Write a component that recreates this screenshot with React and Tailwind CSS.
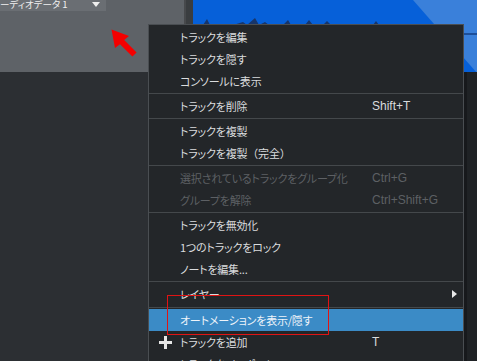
import React from "react";

const menu = [
    { label: "トラックを編集" },
    { label: "トラックを隠す" },
    { label: "コンソールに表示" },
    { sep: true },
    { label: "トラックを削除", key: "Shift+T" },
    { sep: true },
    { label: "トラックを複製" },
    { label: "トラックを複製", tail: "（完全）" },
    { sep: true },
    { label: "選択されているトラックをグループ化", key: "Ctrl+G", disabled: true },
    { label: "グループを解除", key: "Ctrl+Shift+G", disabled: true },
    { sep: true },
    { label: "トラックを無効化" },
    { label: "1つのトラックをロック" },
    { label: "ノートを編集..." },
    { sep: true },
    { label: "レイヤー", sub: true },
    { sep: true, tall: true },
    { label: "オートメーションを表示/隠す", active: true },
    { label: "トラックを追加", key: "T", plus: true },
    { label: "トラックをインポート" },
];

function PlusIcon() {
    return (
        <svg width="13" height="13" viewBox="0 0 13 13">
            <rect x="5" y="0" width="3" height="13" fill="#e6e6e6" />
            <rect x="0" y="5" width="13" height="3" fill="#e6e6e6" />
        </svg>
    );
}

function MenuRow({ item }) {
    if (item.sep) {
        return (
            <div className={`${item.tall ? "h-[4px]" : "h-[3px]"} flex items-center`}>
                <div className="h-px w-full bg-[#44484b]" />
            </div>
        );
    }
    const color = item.disabled
        ? "text-[#5d6064]"
        : item.active
        ? "text-[#eef4fa]"
        : "text-[#dadcde]";
    return (
        <div className={`h-[22px] flex items-center ${item.active ? "bg-[#3b8bc6]" : ""}`}>
            <div className="w-[31px] flex justify-center pl-[2px] shrink-0">
                {item.plus && <PlusIcon />}
            </div>
            <div className={`w-[192px] shrink-0 text-[11px] tracking-[-0.2px] whitespace-nowrap [font-feature-settings:'palt'] ${color}`}>
                {item.label}
                {item.tail && <span className="[font-feature-settings:normal]">{item.tail}</span>}
            </div>
            <div className={`flex-1 text-[12px] font-['Liberation_Sans',sans-serif] ${color}`}>
                {item.key}
            </div>
            {item.sub && (
                <svg width="5" height="8" viewBox="0 0 5 8" className="mr-[6px]">
                    <polygon points="0,0 5,4 0,8" fill="#e8e8e8" />
                </svg>
            )}
        </div>
    );
}

export default function App() {
    return (
        <div className="relative w-[477px] h-[361px] overflow-hidden bg-[#2c2f33] font-['Noto_Sans_CJK_JP',sans-serif]">

            {/* top strip: track header + waveform */}
            <div className="flex h-[72px]">
                <div className="w-[184px] bg-[#5e6267]">
                    <div className="w-[106px] h-[11px] bg-[#6a6e73] flex items-center justify-between pr-[6px] overflow-hidden">
                        <span className="text-[9.5px] leading-[11px] -mt-[2px] text-[#f0f0f0] whitespace-nowrap [font-feature-settings:'palt']">
                            ーディオデータ&nbsp;1
                        </span>
                        <svg width="8" height="5" viewBox="0 0 8 5" className="-mt-[3px]">
                            <polygon points="0,0 8,0 4,5" fill="#eeeeee" />
                        </svg>
                    </div>
                </div>
                <div className="w-[2px] bg-[#47494c]" />
                <div className="w-[7px] bg-[#3a3d40]" />
                <div className="flex-1 bg-[#0660d9]">
                    <svg width="284" height="72" viewBox="0 0 284 72">
                        <polygon points="220,0 284,0 284,73" fill="#3a80da" />
                        <polyline
                            points="0,26 10,25 14,19 17,25 40,25 50,22 54,25 62,18 66,25 72,22 76,25 90,25 95,20 98,25 112,25 116,20 120,25 130,25 134,21 138,25 180,25 183,21 186,25"
                            fill="#17356a"
                        />
                        <rect x="270" y="33" width="14" height="2" fill="#1c4f9a" />
                    </svg>
                </div>
            </div>

            <div className="flex h-[289px]">
                <div className="w-[464px] bg-[#2c2f33]" />
                <div className="w-[3px] bg-[#17191c]" />
                <div className="flex-1 bg-[#1f2225]" />
            </div>

            {/* context menu */}
            <div className="absolute left-[148px] top-[24px] w-[316px] bg-[#232629] border border-[#4a4e52] pt-[1px]">
                {menu.map((item, i) => (
                    <MenuRow key={i} item={item} />
                ))}
            </div>

            {/* annotations */}
            <svg className="absolute left-[104px] top-[24px]" width="36" height="36" viewBox="0 0 36 36">
                <polygon
                    points="7.5,5.5 25,12 20.2,16 32.6,28.4 28.4,32.6 16,20.2 11,24"
                    fill="#f40000"
                />
            </svg>
            <div className="absolute left-[167px] top-[295px] w-[162px] h-[40px] border border-[#e01414]" />
        </div>
    );
}
